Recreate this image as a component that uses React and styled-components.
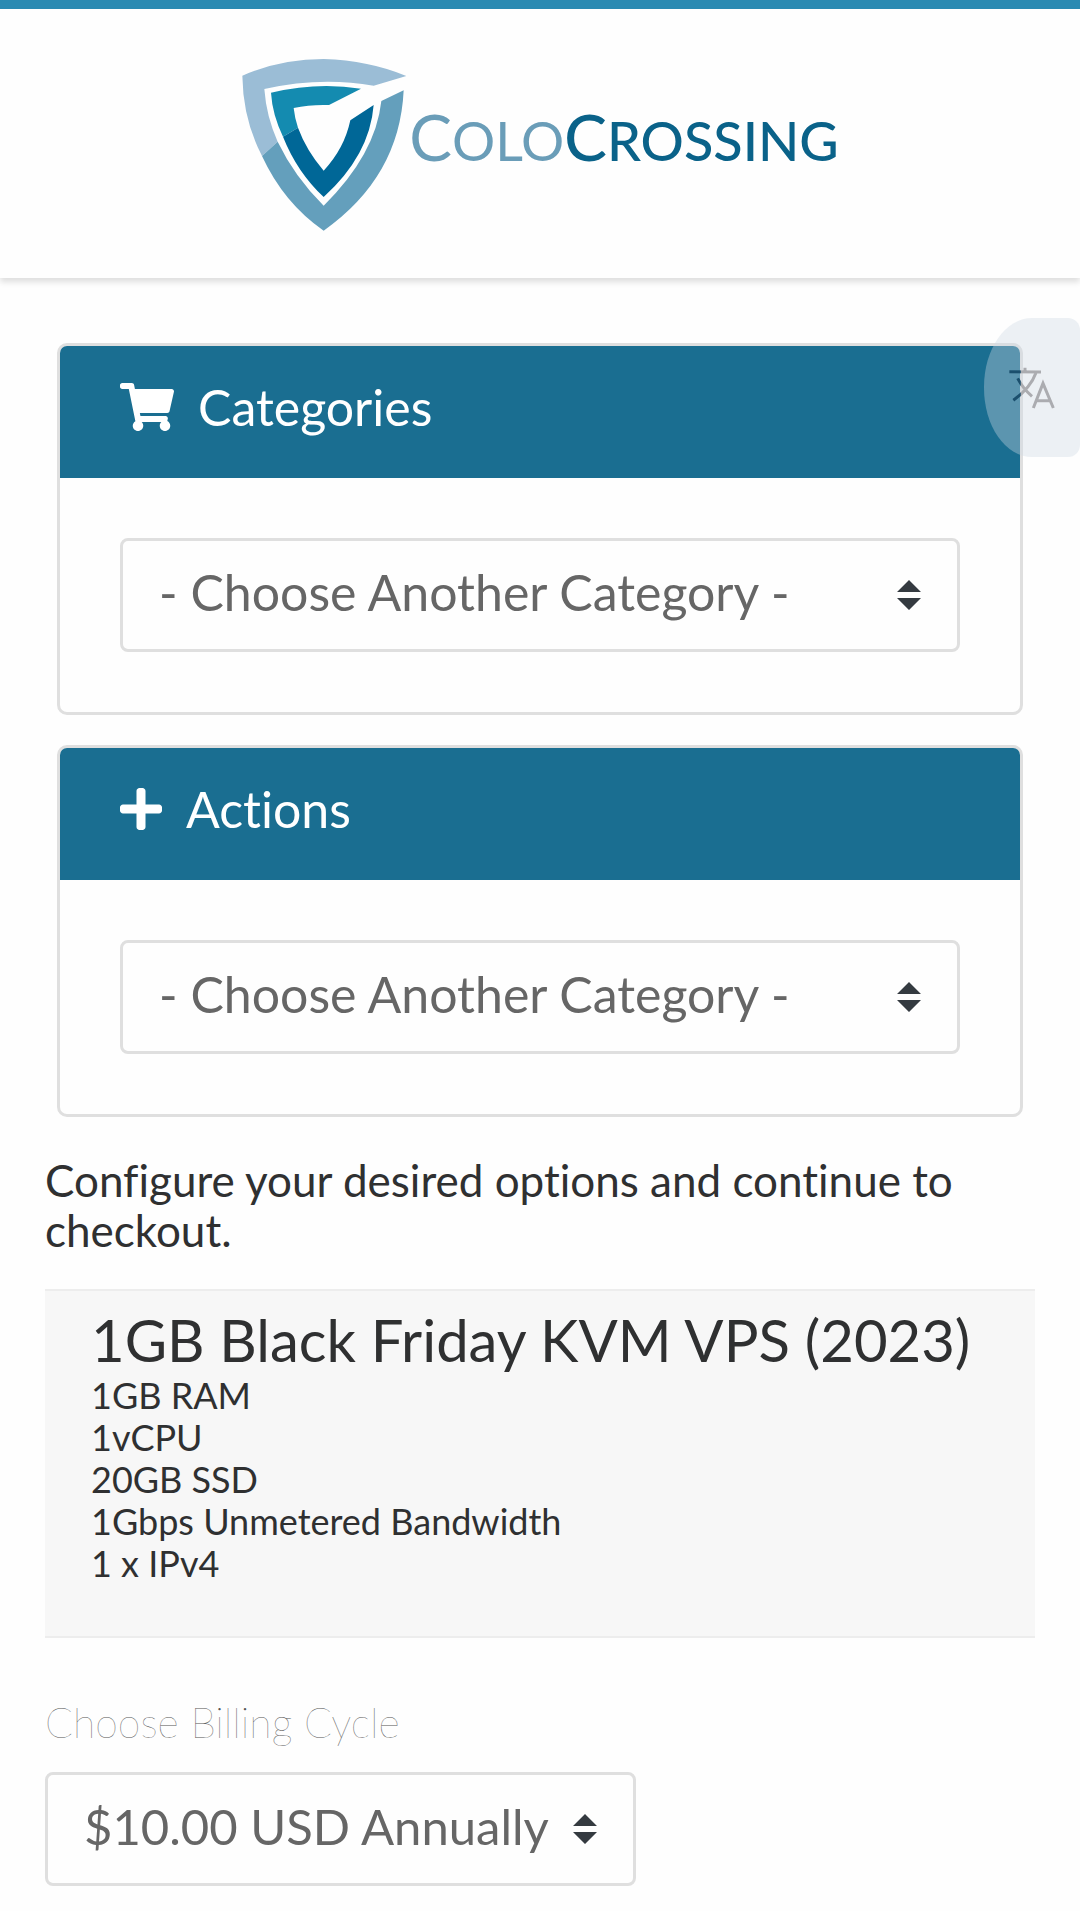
import React from 'react';
import styled, { createGlobalStyle, ThemeProvider } from 'styled-components';
import { FaPlus, FaShoppingCart } from 'react-icons/fa';

const theme = {
  primary: '#1a6e91',
  accent: '#2a8ab2',
  logoLight: '#6a9db8',
  logoDark: '#0a6289',
  border: '#dfdfdf',
  panel: '#f7f7f7',
  text: '#2f3031',
  muted: '#666',
  label: '#555',
};

const GlobalStyle = createGlobalStyle`
  *, *::before, *::after {
    box-sizing: border-box;
  }

  body {
    margin: 0;
    background: #fefefe;
    color: ${theme.text};
    font-family: Lato, 'Open Sans', sans-serif;
    font-variant-ligatures: none;
  }
`;

const StyledHeader = styled.header`
  display: flex;
  justify-content: center;
  padding: 48px 0 46px;
  border-top: 9px solid ${(p) => p.theme.accent};
  box-shadow: 0 4px 6px rgba(0, 0, 0, 0.13);
`;

const StyledLogo = styled.a`
  display: flex;
  align-items: center;
  text-decoration: none;
`;

const StyledBrand = styled.span`
  display: flex;
  align-items: baseline;
  padding-bottom: 12px;
  font-size: 54px;
  line-height: 64px;
  text-transform: uppercase;
`;

const StyledBrandPart = styled.span`
  color: ${({ $dark, theme: t }) => ($dark ? t.logoDark : t.logoLight)};
  font-weight: ${({ $dark }) => ($dark ? 500 : 400)};

  &::first-letter {
    font-size: 64px;
  }
`;

const StyledMain = styled.main`
  padding: 65px 45px 26px;
`;

const StyledCards = styled.div`
  display: grid;
  gap: 30px;
  padding: 0 12px;
`;

const StyledCard = styled.section`
  overflow: hidden;
  border: 3px solid ${(p) => p.theme.border};
  border-radius: 10px;
`;

const StyledCardHeader = styled.h2`
  display: flex;
  align-items: center;
  gap: 24px;
  margin: 0;
  padding: 30px 60px 40px;
  background: ${(p) => p.theme.primary};
  color: #fff;
  font-size: 50px;
  font-weight: 400;
  line-height: 62px;

  svg {
    width: ${({ $iconWidth }) => $iconWidth}px;
    height: 48px;
  }
`;

const StyledCardBody = styled.div`
  padding: 60px;
`;

const StyledSelectBox = styled.div`
  display: ${({ $inline }) => ($inline ? 'inline-grid' : 'grid')};
  align-items: center;
  font-size: ${({ $inline }) => ($inline ? 49 : 50)}px;

  > * {
    grid-area: 1 / 1;
  }
`;

const StyledSelect = styled.select`
  appearance: none;
  width: 100%;
  height: 114px;
  padding: 0 82px 6px 36px;
  border: 3px solid ${(p) => p.theme.border};
  border-radius: 8px;
  background: transparent;
  color: ${(p) => p.theme.muted};
  font-family: inherit;
  font-size: inherit;
`;

const StyledCaret = styled.svg`
  justify-self: end;
  width: 24px;
  height: 30px;
  margin-right: 39px;
  fill: #343a40;
  pointer-events: none;
`;

const StyledIntro = styled.p`
  margin: 38px 0 34px;
  font-size: 44px;
  line-height: 50px;
`;

const StyledProduct = styled.section`
  padding: 15px 46px 52px;
  border: solid #ededed;
  border-width: 2px 0;
  background: ${(p) => p.theme.panel};
`;

const StyledProductTitle = styled.h1`
  margin: 0;
  font-size: 58px;
  font-weight: 400;
  line-height: 68px;
`;

const StyledSpecs = styled.ul`
  margin: 0;
  padding: 0;
  list-style: none;
  font-size: 36px;
  line-height: 42px;
`;

const StyledBilling = styled.div`
  display: grid;
  justify-items: start;
  gap: 24px;
  margin-top: 60px;
`;

const StyledLabel = styled.label`
  color: ${(p) => p.theme.label};
  font-size: 41px;
  font-weight: 100;
  line-height: 50px;
`;

const StyledTranslate = styled.button`
  position: fixed;
  top: 318px;
  right: 0;
  display: flex;
  align-items: center;
  width: 96px;
  height: 139px;
  padding: 0 0 0 24px;
  border: 0;
  border-radius: 48px 12px 12px 48px / 69px 12px 12px 69px;
  background: rgba(205, 217, 228, 0.37);
`;

const specs = ['1GB RAM', '1vCPU', '20GB SSD', '1Gbps Unmetered Bandwidth', '1 x IPv4'];

const Shield = () => (
  <svg width="168" height="175" viewBox="42 50 504 525" aria-hidden="true">
    <path fill="#9bbdd6" d="M46 106Q160 56 290 56Q425 60 538 107L440 136Q280 108 112 146Q118 228 152 304L105 347Q48 238 46 106Z" />
    <path fill="#649fbc" d="M105 347L152 304Q202 408 290 496Q446 342 463 182L530 150Q518 410 290 571Q170 488 105 347Z" />
    <path fill="#148bb0" d="M132 157Q270 124 402 145L306 194Q250 192 200 203Q203 232 213 262L168 289Q136 222 132 157Z" />
    <path fill="#006797" d="M168 289L213 262Q238 330 290 391Q352 325 370 240L440 194Q428 345 290 470Q210 395 168 289Z" />
  </svg>
);

const Translate = () => (
  <svg width="48" height="44" viewBox="444 200 144 132" fill="none" aria-hidden="true">
    <defs>
      <linearGradient id="ink" gradientUnits="userSpaceOnUse" x1="481" y1="0" x2="483" y2="0">
        <stop offset="0" stopColor="#1b4f6d" />
        <stop offset="1" stopColor="#abacb0" />
      </linearGradient>
    </defs>
    <g stroke="url(#ink)" strokeWidth="9">
      <path d="M448 217.5L543 218M495 205V218M528 220Q512 265 460 303M473 237Q488 266 516 291" />
      <path d="M520 326L549 252L580 326M530 304H571" />
    </g>
  </svg>
);

const Select = ({ options, inline, ...props }) => (
  <StyledSelectBox $inline={inline}>
    <StyledSelect {...props}>
      {options.map((option) => (
        <option key={option}>{option}</option>
      ))}
    </StyledSelect>
    <StyledCaret viewBox="0 0 24 30" aria-hidden="true">
      <path d="M12 0L24 12H0ZM0 18H24L12 30Z" />
    </StyledCaret>
  </StyledSelectBox>
);

const Card = ({ icon: Icon, iconWidth, title }) => (
  <StyledCard>
    <StyledCardHeader $iconWidth={iconWidth}>
      <Icon aria-hidden="true" />
      {title}
    </StyledCardHeader>
    <StyledCardBody>
      <Select aria-label={title} options={['- Choose Another Category -']} />
    </StyledCardBody>
  </StyledCard>
);

const App = () => (
  <ThemeProvider theme={theme}>
    <GlobalStyle />
    <StyledHeader>
      <StyledLogo href="#">
        <Shield />
        <StyledBrand>
          <StyledBrandPart>Colo</StyledBrandPart>
          <StyledBrandPart $dark>Crossing</StyledBrandPart>
        </StyledBrand>
      </StyledLogo>
    </StyledHeader>

    <StyledMain>
      <StyledCards>
        <Card icon={FaShoppingCart} iconWidth={54} title="Categories" />
        <Card icon={FaPlus} iconWidth={42} title="Actions" />
      </StyledCards>

      <StyledIntro>Configure your desired options and continue to checkout.</StyledIntro>

      <StyledProduct>
        <StyledProductTitle>1GB Black Friday KVM VPS (2023)</StyledProductTitle>
        <StyledSpecs>
          {specs.map((spec) => (
            <li key={spec}>{spec}</li>
          ))}
        </StyledSpecs>
      </StyledProduct>

      <StyledBilling>
        <StyledLabel htmlFor="billing-cycle">Choose Billing Cycle</StyledLabel>
        <Select id="billing-cycle" inline options={['$10.00 USD Annually']} />
      </StyledBilling>
    </StyledMain>

    <StyledTranslate type="button" aria-label="Translate">
      <Translate />
    </StyledTranslate>
  </ThemeProvider>
);

export default App;
